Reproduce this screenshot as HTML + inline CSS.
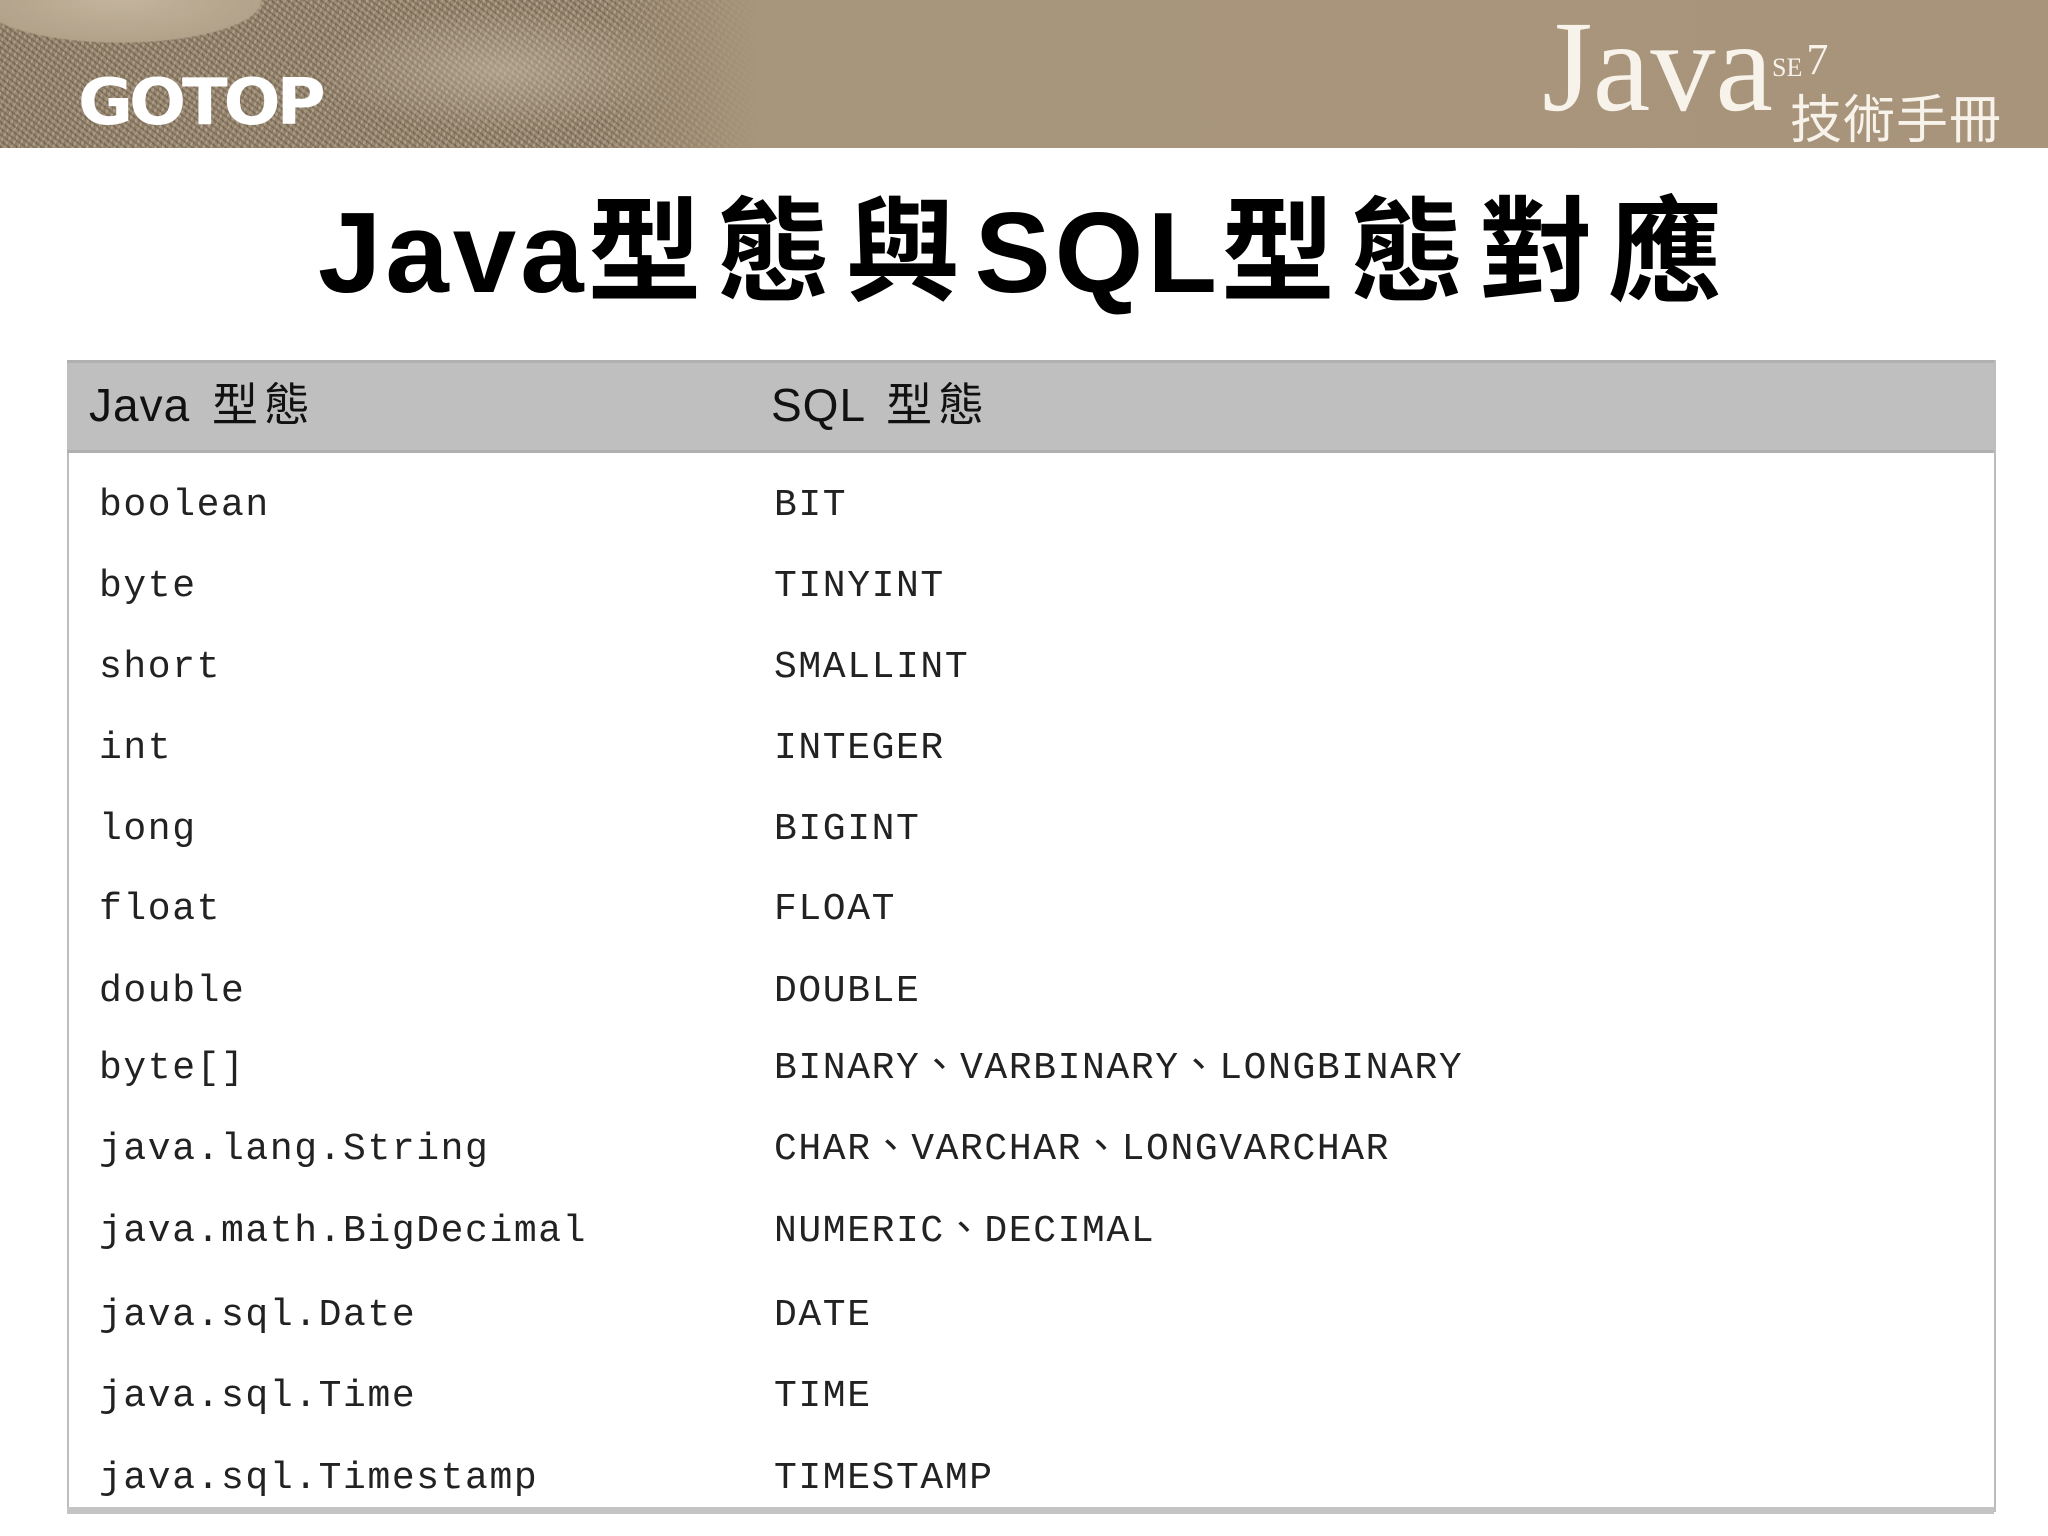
<!DOCTYPE html>
<html><head><meta charset="utf-8"><style>
html,body{margin:0;padding:0;}
body{width:2048px;height:1536px;position:relative;background:#fff;overflow:hidden;font-family:"Liberation Sans","Noto Sans CJK TC",sans-serif;}
.banner{position:absolute;left:0;top:0;width:2048px;height:148px;background:linear-gradient(90deg,#8f7f6a 0px,#9a8a74 300px,#a59379 600px,#a8967c 760px,#a8957b 1400px,#a7947a 2048px);}
.sand{position:absolute;left:0;top:0;width:760px;height:148px;
background:
radial-gradient(ellipse 200px 60px at 120px 0px,#c8b9a2 0,#b6a68e 70%,transparent 72%),
radial-gradient(ellipse 260px 90px at 500px 70px,rgba(200,188,168,.6),transparent 70%),
repeating-linear-gradient(37deg,rgba(70,55,40,.35) 0 2px,transparent 2px 5px),
repeating-linear-gradient(-61deg,rgba(220,205,180,.35) 0 2px,transparent 2px 6px),
repeating-linear-gradient(83deg,rgba(90,75,55,.3) 0 1px,transparent 1px 4px),
#9c8c76;
-webkit-mask-image:linear-gradient(90deg,#000 600px,transparent 760px);mask-image:linear-gradient(90deg,#000 600px,transparent 760px);opacity:.9}
.gotop{position:absolute;left:78px;top:66px;font:900 64px "DejaVu Sans",sans-serif;color:#fff;letter-spacing:-4px;transform:scaleX(1.05);transform-origin:left;}
.java{position:absolute;left:1542px;top:2px;font:130px "Liberation Serif",serif;color:#f7f2ea;line-height:1;}
.se7{position:absolute;left:1772px;top:36px;font:26px "Liberation Serif",serif;color:#f7f2ea;}
.se7 b{font-weight:normal;font-size:44px;position:relative;top:-2px;margin-left:4px;}
.tech{position:absolute;left:1790px;top:90px;font:52px "Noto Sans CJK TC",sans-serif;color:#f7f2ea;line-height:1;letter-spacing:1px;}
h1{position:absolute;left:318px;top:186px;margin:0;font:bold 114px "Liberation Sans","Noto Sans CJK TC",sans-serif;line-height:1.2;color:#000;white-space:nowrap;letter-spacing:4px;}
h1 i{font-style:normal;letter-spacing:15px;}
.tbl{position:absolute;left:67px;top:360px;width:1925px;height:1152px;border:2px solid #bdbdbd;border-top:none;border-bottom:none;}
.head{position:absolute;left:67px;top:360px;width:1927px;height:93px;background:#c0bfbf;border-top:3px solid #b0b0b0;border-bottom:3px solid #b0b0b0;box-sizing:border-box;}
.head span{position:absolute;top:6px;font:46px "Liberation Sans","Noto Sans CJK TC",sans-serif;color:#111;letter-spacing:1px;}
.head i{font-style:normal;letter-spacing:6px;margin-left:8px;}
.foot{position:absolute;left:67px;top:1507px;width:1927px;height:7px;background:#c4c4c4;}
.r{position:absolute;font:38px "Liberation Mono","Noto Sans CJK TC",monospace;letter-spacing:1.6px;color:#222;white-space:nowrap;line-height:1;margin-top:3px;}
</style></head><body>
<div class="banner"></div>
<div class="sand"></div>
<div class="gotop">GOTOP</div>
<div class="java">Java</div>
<div class="se7">SE<b>7</b></div>
<div class="tech">技術手冊</div>
<h1>Java<i>型態與</i>SQL<i>型態對應</i></h1>
<div class="tbl"></div>
<div class="head"><span style="left:22px">Java <i>型態</i></span><span style="left:704px">SQL <i>型態</i></span></div>
<div class="foot"></div>
<div class="r" style="left:99px;top:484px">boolean</div><div class="r" style="left:774px;top:484px">BIT</div>
<div class="r" style="left:99px;top:565px">byte</div><div class="r" style="left:774px;top:565px">TINYINT</div>
<div class="r" style="left:99px;top:646px">short</div><div class="r" style="left:774px;top:646px">SMALLINT</div>
<div class="r" style="left:99px;top:727px">int</div><div class="r" style="left:774px;top:727px">INTEGER</div>
<div class="r" style="left:99px;top:808px">long</div><div class="r" style="left:774px;top:808px">BIGINT</div>
<div class="r" style="left:99px;top:888px">float</div><div class="r" style="left:774px;top:888px">FLOAT</div>
<div class="r" style="left:99px;top:970px">double</div><div class="r" style="left:774px;top:970px">DOUBLE</div>
<div class="r" style="left:99px;top:1047px">byte[]</div><div class="r" style="left:774px;top:1047px">BINARY、VARBINARY、LONGBINARY</div>
<div class="r" style="left:99px;top:1128px">java.lang.String</div><div class="r" style="left:774px;top:1128px">CHAR、VARCHAR、LONGVARCHAR</div>
<div class="r" style="left:99px;top:1210px">java.math.BigDecimal</div><div class="r" style="left:774px;top:1210px">NUMERIC、DECIMAL</div>
<div class="r" style="left:99px;top:1294px">java.sql.Date</div><div class="r" style="left:774px;top:1294px">DATE</div>
<div class="r" style="left:99px;top:1375px">java.sql.Time</div><div class="r" style="left:774px;top:1375px">TIME</div>
<div class="r" style="left:99px;top:1457px">java.sql.Timestamp</div><div class="r" style="left:774px;top:1457px">TIMESTAMP</div>
</body></html>
